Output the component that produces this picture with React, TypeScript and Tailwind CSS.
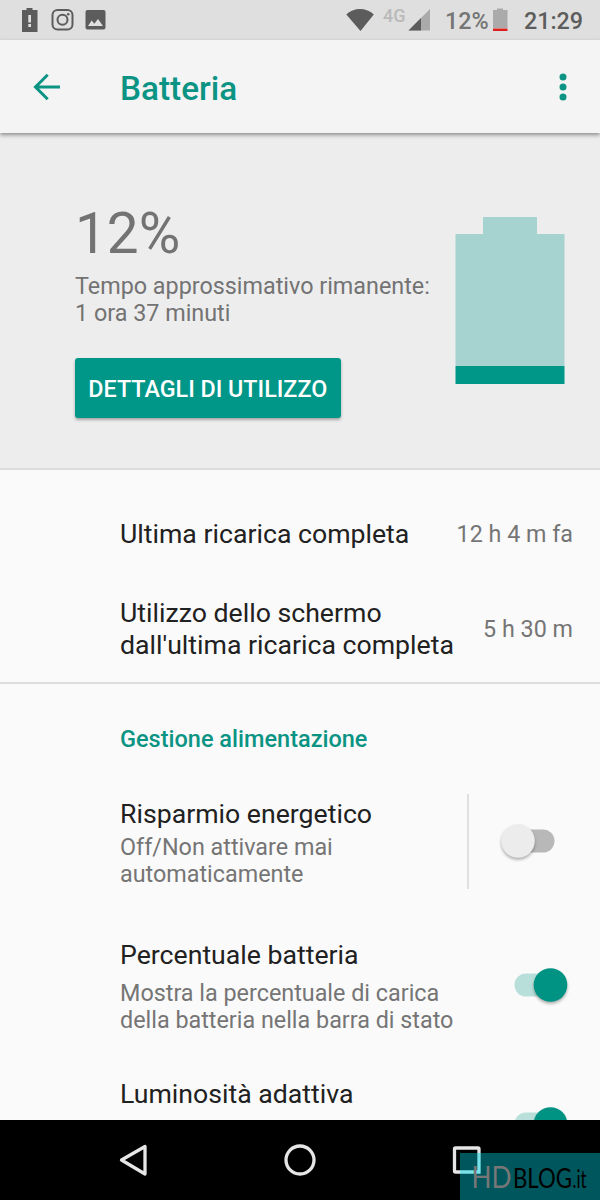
import clsx from "clsx";

const StatusBar = () => (
  <div className="flex h-10 items-center bg-[#dfdfdf] font-medium text-[#5c5c5c]">
    <svg className="h-10 w-[120px]" viewBox="0 0 120 40" fill="#5c5c5c">
      <path fillRule="evenodd" d="M22 10h4.500V8h6v2h5v22H22zM28.300 15v7.500h2.700V15zM28.300 24v3h2.700v-3z" />
      <rect x="52.500" y="10" width="20" height="19.500" rx="5" fill="none" stroke="#5c5c5c" strokeWidth="2" />
      <circle cx="62.500" cy="19.700" r="5" fill="none" stroke="#5c5c5c" strokeWidth="2" />
      <circle cx="68.200" cy="14.200" r="1.300" />
      <path fillRule="evenodd" d="M87.500 10h16q2 0 2 2v15.500q0 2-2 2h-16q-2 0-2-2V12q0-2 2-2zM88 26h15l-5-7-3.700 4.800-2.600-3.300z" />
    </svg>
    <div className="flex-1" />
    <svg className="h-10 w-[30px]" viewBox="344 0 30 40" fill="#5c5c5c">
      <path d="M345.300 14.500Q351 9 359 9t13.800 5.500L359.500 31z" />
    </svg>
    <span className="ml-2 w-[25px] -translate-y-1 text-[18px] leading-none text-[#bababa]">4G</span>
    <svg className="h-10 w-[22px]" viewBox="407 0 22 40">
      <path d="M407.500 30.500 429 9v21.500z" fill="#aaaaaa" />
      <path d="M407.500 30.500 420 18v12.500z" fill="#5c5c5c" />
    </svg>
    <span className="ml-[15px] w-12 pt-[3px] text-[23.300px] leading-none text-[#757575]">12%</span>
    <svg className="h-10 w-4" viewBox="493 0 16 40">
      <path d="M493 10h4V8.500h6V10h4.500v18H493z" fill="#aaaaaa" />
      <path d="M493 28.500h14.500V31H493z" fill="#db1f1b" />
    </svg>
    <span className="ml-[15px] w-[76px] pt-[3px] text-[23.300px] leading-none">21:29</span>
  </div>
);

const Toolbar = () => (
  <div className="relative flex h-[93px] items-center bg-[#f4f4f4] shadow-[0_2px_4px_rgba(0,0,0,0.4)]">
    <svg className="ml-[33px] h-7 w-7" viewBox="0 0 28 28" fill="none" stroke="#0b9484" strokeWidth="3">
      <path d="M27 14H3M14.700 1.800 2.500 14l12.200 12.200" />
    </svg>
    <h1 className="ml-[59px] flex-1 pt-1 text-[33.300px] leading-none font-medium text-[#0b9484]">Batteria</h1>
    <svg className="mr-8 h-7 w-2.5" viewBox="0 0 10 28" fill="#0b9484">
      <circle cx="5" cy="4" r="3.500" />
      <circle cx="5" cy="14" r="3.500" />
      <circle cx="5" cy="24" r="3.500" />
    </svg>
  </div>
);

const BatterySummary = () => (
  <div className="flex h-[337px] border-b-2 border-[#dcdcdc] bg-[#ededed] pl-[75px] text-[#737373]">
    <div className="w-[380px] pt-[67px]">
      <p className="text-[56.700px] leading-[68px]">12%</p>
      <p className="mt-[5px] text-[23.350px] leading-[27.300px] whitespace-nowrap">
        Tempo approssimativo rimanente:
        <br />
        1 ora 37 minuti
      </p>
      <button className="mt-[30px] flex h-[60px] w-[265.500px] items-center justify-center rounded-[3px] bg-[#009688] pt-[3px] text-[23.300px] font-medium whitespace-nowrap text-white shadow-[0_2px_3px_rgba(0,0,0,0.3)]">
        DETTAGLI DI UTILIZZO
      </button>
    </div>
    <svg className="mt-[84px] h-[167px] w-[110px]" viewBox="0 0 110 167">
      <path d="M28 0h54v17h27.500v132H.5V17H28z" fill="#a6d3cf" />
      <path d="M.5 149h109v18H.5z" fill="#009688" />
    </svg>
  </div>
);

const Switch = ({ on }: { on: boolean }) => (
  <svg className="h-12 w-[76px] shrink-0" viewBox="0 0 76 48">
    <rect x="18.500" y="12.500" width="40" height="23" rx="11.500" fill={on ? "#b8dfda" : "#b8b8b8"} />
    <circle
      className="drop-shadow-[0_2px_1.500px_rgba(0,0,0,0.3)]"
      cx={on ? 54.500 : 22}
      cy="24"
      r="16.800"
      fill={on ? "#009384" : "#ececec"}
    />
  </svg>
);

const StatRow = ({ title, value, className }: { title: React.ReactNode; value: string; className: string }) => (
  <div className={clsx("flex items-center justify-between pr-[27px] pl-[120px]", className)}>
    <p className="text-[26.670px] leading-[31.600px] text-[#212121]">{title}</p>
    <p className="text-[23.300px] text-[#757575]">{value}</p>
  </div>
);

const Summary = ({ children }: { children: React.ReactNode }) => (
  <p className="text-[23.350px] leading-[27.300px] text-[#757575]">{children}</p>
);

const SettingTitle = ({ children }: { children: React.ReactNode }) => (
  <p className="text-[26.670px] leading-8 text-[#212121]">{children}</p>
);

const NavBar = () => (
  <div className="relative h-20 bg-black">
    <svg className="h-20 w-[600px]" viewBox="0 0 600 80" fill="none" stroke="#e6e6e6" strokeWidth="3.300">
      <path d="M121.500 40 145 26.500v27.500z" strokeLinejoin="round" />
      <circle cx="300" cy="40" r="14" />
      <rect x="454.500" y="28" width="24.500" height="24" rx="1" />
    </svg>
    {/* Watermark laid over the corner */}
    <div className="absolute right-0 bottom-0 h-[47px] w-[140px] bg-[#00565d]">
      <svg className="h-[47px] w-[140px] overflow-visible" viewBox="0 0 140 47" fontFamily="Lato, sans-serif">
        <path d="M0 19h19V0" fill="none" stroke="#79e3e9" strokeWidth="3.300" />
        <text x="11.500" y="35" fontSize="31" textLength="40" lengthAdjust="spacingAndGlyphs" fill="#777777">HD</text>
        <text x="53" y="35" fontSize="26" textLength="59" lengthAdjust="spacingAndGlyphs" fill="#000000">BLOG</text>
        <text x="112.500" y="35" fontSize="25" textLength="14" lengthAdjust="spacingAndGlyphs" fill="#000000">.it</text>
      </svg>
    </div>
  </div>
);

export default function App() {
  return (
    <div className="flex h-[1200px] w-[600px] flex-col overflow-hidden bg-[#fafafa] font-[Roboto,sans-serif]">
      <StatusBar />
      <Toolbar />
      <BatterySummary />

      <div className="h-[214px] border-b-2 border-[#dedede] pt-[18px]">
        <StatRow className="h-[93px]" title="Ultima ricarica completa" value="12 h 4 m fa" />
        <StatRow
          className="h-[97px]"
          title={<>Utilizzo dello schermo<br />dall'ultima ricarica completa</>}
          value="5 h 30 m"
        />
      </div>

      <div className="h-[436px] overflow-hidden">
        <h2 className="pt-[41px] pl-[120px] text-[23.500px] leading-7 font-medium text-[#0b9484]">
          Gestione alimentazione
        </h2>
        <div className="mt-[41px] flex h-[95px] items-center pl-[120px]">
          <div className="w-[347px] pt-[3px]">
            <SettingTitle>Risparmio energetico</SettingTitle>
            <div className="mt-1">
              <Summary>Off/Non attivare mai<br />automaticamente</Summary>
            </div>
          </div>
          <div className="h-full w-0.5 bg-[#e0e0e0]" />
          <div className="-mt-px ml-[27px]">
            <Switch on={false} />
          </div>
        </div>
        <div className="mt-[50px] flex items-start pl-[120px]">
          <div className="w-[376px]">
            <SettingTitle>Percentuale batteria</SettingTitle>
            <div className="mt-[9px]">
              <Summary>Mostra la percentuale di carica<br />della batteria nella barra di stato</Summary>
            </div>
          </div>
          <div className="mt-[22px]">
            <Switch on />
          </div>
        </div>
        <div className="mt-[43px] flex items-start pl-[120px]">
          <div className="w-[376px]">
            <SettingTitle>Luminosità adattiva</SettingTitle>
          </div>
          <div className="mt-[22px]">
            <Switch on />
          </div>
        </div>
      </div>
      <NavBar />
    </div>
  );
}
